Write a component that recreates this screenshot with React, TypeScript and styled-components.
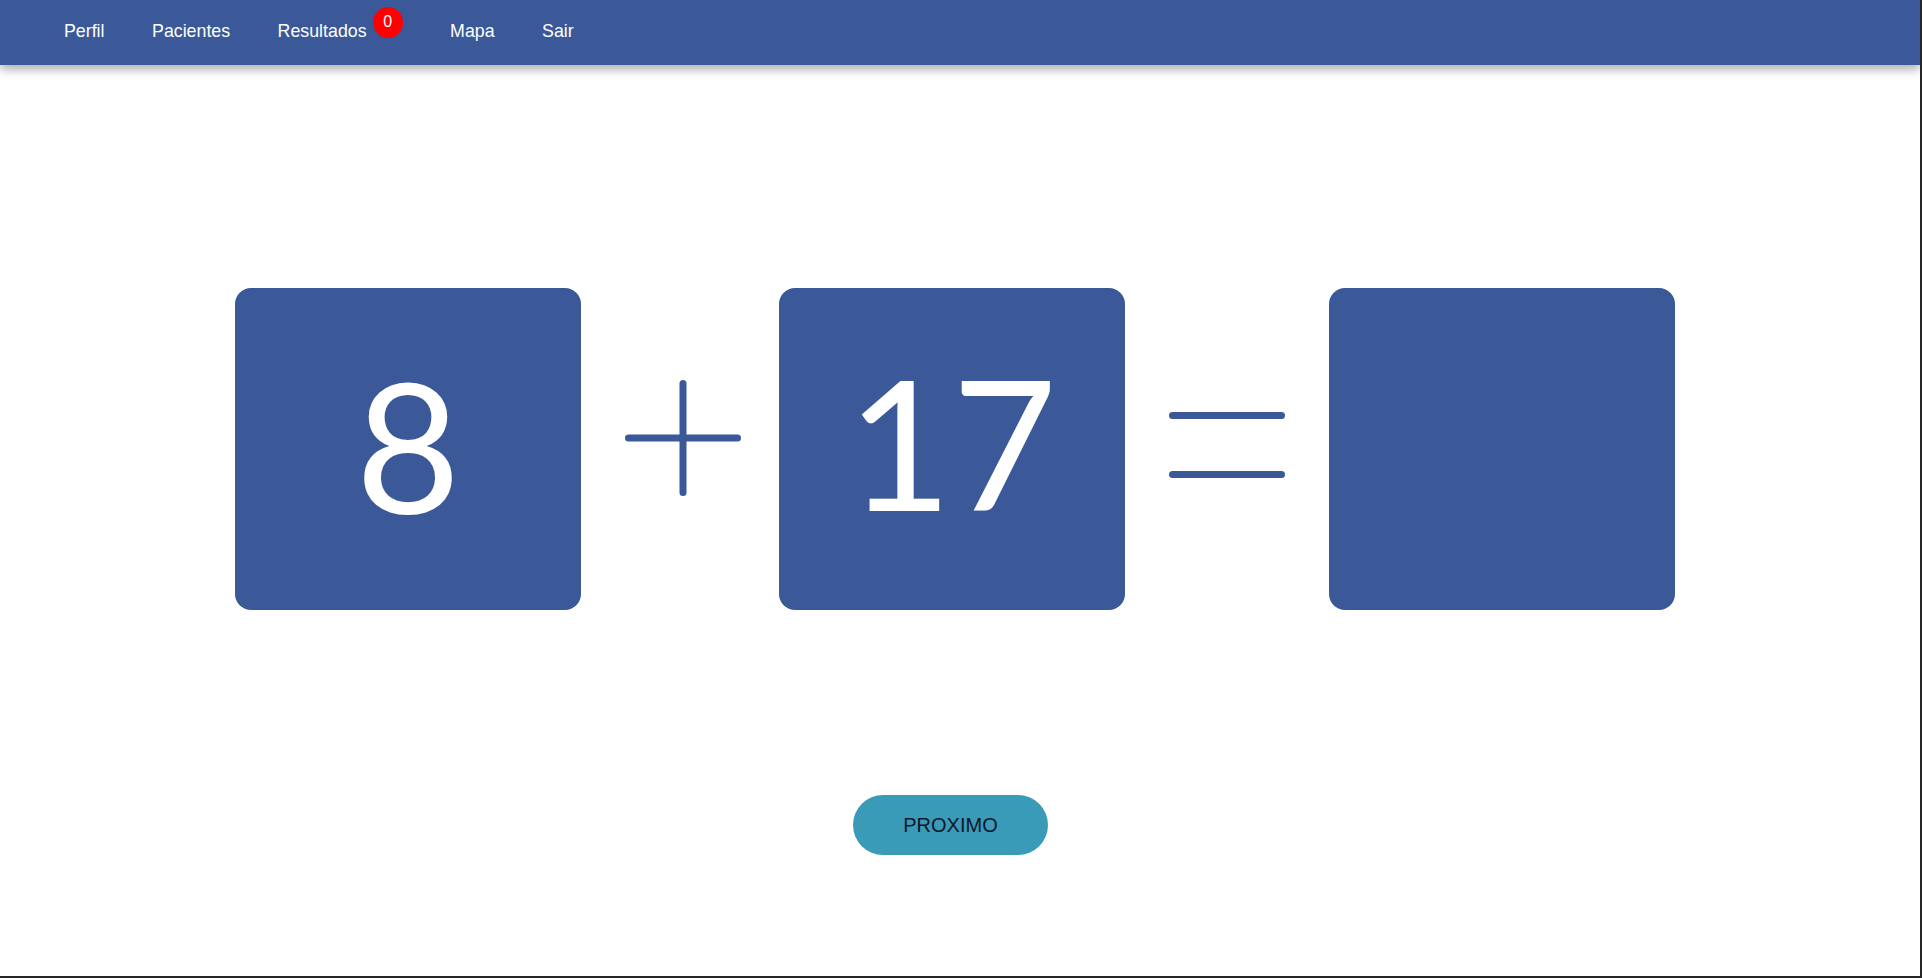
import React from "react";
import styled, { createGlobalStyle } from "styled-components";

const Global = createGlobalStyle`
  html, body {
    margin: 0;
    padding: 0;
    background: #262626;
    overflow: hidden;
  }
  * { box-sizing: border-box; }
`;

const Page = styled.div`
  width: 1920px;
  height: 976px;
  background: #ffffff;
  display: flex;
  flex-direction: column;
  overflow: hidden;
  font-family: "Liberation Sans", Arial, sans-serif;
`;

const NavBar = styled.nav`
  position: relative;
  z-index: 1;
  height: 65px;
  flex: none;
  background: #3b5998;
  box-shadow: 0 4px 10px rgba(0, 0, 0, 0.35);
  display: flex;
  align-items: center;
  gap: 47.5px;
  padding: 0 0 3px 64px;
`;

const NavLink = styled.a`
  display: inline-flex;
  align-items: center;
  gap: 6px;
  color: #ffffff;
  font-size: 17.8px;
  text-decoration: none;
  cursor: pointer;
`;

const Badge = styled.span`
  width: 30px;
  height: 31px;
  border-radius: 50%;
  background: #ff0000;
  color: #ffffff;
  font-size: 16px;
  display: inline-flex;
  align-items: center;
  justify-content: center;
  transform: translateY(-9px);
`;

const Main = styled.main`
  flex: 1;
  display: flex;
  flex-direction: column;
  align-items: center;
  padding: 223px 10px 0 0;
`;

const Equation = styled.div`
  display: flex;
  align-items: center;
  height: 322px;
`;

const Card = styled.div<{ $lift?: number }>`
  width: 346px;
  height: 322px;
  border-radius: 16px;
  background: #3b5998;
  color: #ffffff;
  display: flex;
  align-items: center;
  justify-content: center;
  font-family: Lato, "Open Sans", sans-serif;
  font-size: 181px;
  line-height: 1;
  padding-bottom: ${(p) => 10 + (p.$lift ?? 0) * 2}px;
`;

const Operator = styled.div<{ $width: number; $lift: number; $shift?: number }>`
  width: ${(p) => p.$width}px;
  display: flex;
  justify-content: center;
  align-items: center;
  margin-bottom: ${(p) => p.$lift * 2}px;
  padding-left: ${(p) => (p.$shift ?? 0) * 2}px;
  color: #3b5998;
`;

const NextButton = styled.button`
  margin: 185px 9px 0 0;
  width: 195px;
  height: 60px;
  border: none;
  border-radius: 30px;
  background: #3a9bb8;
  color: #10182a;
  font-family: "Liberation Sans", Arial, sans-serif;
  font-size: 20px;
  cursor: pointer;
`;

const PlusIcon = () => (
  <svg width="116" height="116" viewBox="0 0 116 116">
    <g stroke="currentColor" strokeWidth="7" strokeLinecap="round">
      <line x1="3.5" y1="58" x2="112.5" y2="58" />
      <line x1="58" y1="3.5" x2="58" y2="112.5" />
    </g>
  </svg>
);

const EqualsIcon = () => (
  <svg width="116" height="66" viewBox="0 0 116 66">
    <g stroke="currentColor" strokeWidth="7" strokeLinecap="round">
      <line x1="3.5" y1="3.5" x2="112.5" y2="3.5" />
      <line x1="3.5" y1="62.5" x2="112.5" y2="62.5" />
    </g>
  </svg>
);

const links = ["Perfil", "Pacientes", "Resultados", "Mapa", "Sair"];

export default function App() {
  return (
    <>
      <Global />
      <Page>
        <NavBar>
          {links.map((l) => (
            <NavLink key={l}>
              {l}
              {l === "Resultados" && <Badge>0</Badge>}
            </NavLink>
          ))}
        </NavBar>
        <Main>
          <Equation>
            <Card>8</Card>
            <Operator $width={198} $lift={11} $shift={3}>
              <PlusIcon />
            </Operator>
            <Card $lift={3}>17</Card>
            <Operator $width={204} $lift={4}>
              <EqualsIcon />
            </Operator>
            <Card />
          </Equation>
          <NextButton>PROXIMO</NextButton>
        </Main>
      </Page>
    </>
  );
}
